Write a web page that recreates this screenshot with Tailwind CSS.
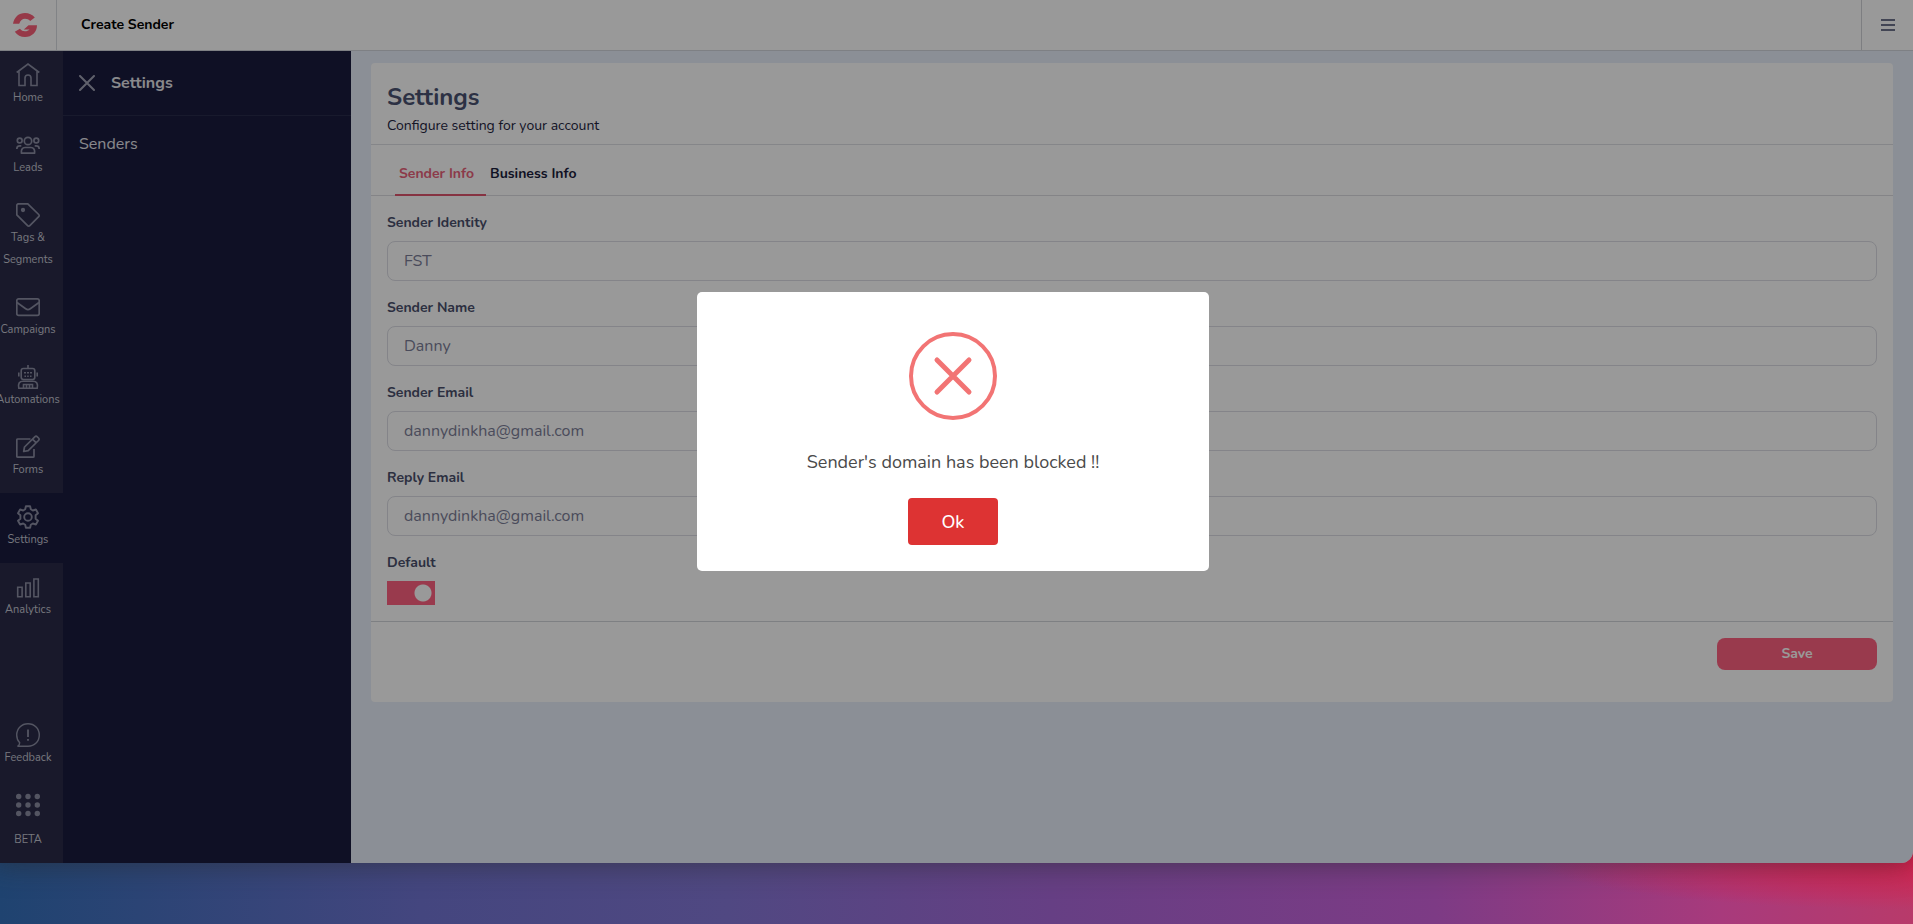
<!DOCTYPE html>
<html lang="en">
<head>
  <meta charset="UTF-8" />
  <meta name="viewport" content="width=device-width, initial-scale=1.0" />
  <title>Create Sender</title>
  <script src="https://cdn.jsdelivr.net/npm/@tailwindcss/browser@4"></script>
</head>
<body class="h-screen overflow-hidden flex flex-col font-[Nunito,'Open_Sans',sans-serif] text-sm bg-[radial-gradient(ellipse_380px_50px_at_100%_93%,#d8204c,transparent),linear-gradient(90deg,#1f4370_0%,#44467f_22%,#504882_38%,#663f84_55%,#7d3b85_75%,#a83a7c_90%,#b83a6a_100%)]">

  <!-- app window -->
  <div class="relative flex-1 min-h-0 -ml-[7px] flex flex-col overflow-hidden rounded-br-xl bg-[#e8eefa] shadow-[0_0_30px_rgba(40,40,40,0.6)]">

    <header class="h-[51px] shrink-0 flex items-stretch bg-white border-b border-[#d2d6dc]">
      <a href="#" aria-label="Dashboard" class="w-16 flex items-center justify-center pr-1 border-r border-[#d8dbe0]">
        <svg class="size-6 ml-1" viewBox="0 0 24 24" fill="#fa6078">
          <path d="M0 10.800C1.200 4 6 0 12 0c4 0 7.300 1.600 9.800 4.500L17.200 8C15.800 6.500 14.200 5.700 12 5.700c-2.600 0-4.600 1.600-5.800 5.100z" />
          <path d="M24 12.200C24 19 18.800 24 12 24c-4.200 0-7.800-2-10.200-5.300l5.100-3c1.300 1.700 3 2.500 5.100 2.500 1.900 0 3.400-.6 4.500-1.800h-5.700l4.700-4.200z" />
        </svg>
      </a>
      <h1 class="flex-1 flex items-center pl-6 font-bold text-black">Create Sender</h1>
      <button type="button" aria-label="Menu" class="w-[52px] flex items-center justify-center border-l border-[#d0d3d8] text-[#6f748c]">
        <svg class="w-3.5 h-3.5" viewBox="0 0 14 14" stroke="currentColor" stroke-width="2"><path d="M0 2h14M0 7h14M0 12h14" /></svg>
      </button>
    </header>

    <div class="flex-1 min-h-0 flex">

      <!-- icon rail -->
      <nav class="w-[70px] shrink-0 flex flex-col bg-[#2a2b48] text-[11px] leading-[22px] text-[#c5c6d2] text-center">
        <a href="#" class="py-3 flex flex-col items-center">
          <svg class="size-6 text-[#8c8ea4]" viewBox="0 0 24 24" fill="none" stroke="currentColor" stroke-width="1.6"><path d="M.7 9.500L12 1l11.300 8.500M3 8v14.500h6V15a3 3 0 0 1 6 0v7.500h6V8" /></svg>
          Home
        </a>
        <a href="#" class="py-3 flex flex-col items-center">
          <svg class="size-6 text-[#8c8ea4]" viewBox="0 0 24 24" fill="none" stroke="currentColor" stroke-width="1.7"><circle cx="12" cy="8" r="3.700" /><circle cx="3.700" cy="7.500" r="2.400" /><circle cx="20.300" cy="7.500" r="2.400" /><path d="M5.500 20.200h13c.6-3.500-1-5.700-3.500-5.700H9c-2.500 0-4.100 2.200-3.500 5.700zM.8 16c0-2 1.200-3.200 3-3.200h1.500M23.200 16c0-2-1.200-3.200-3-3.200h-1.500" /></svg>
          Leads
        </a>
        <a href="#" class="py-3 flex flex-col items-center">
          <svg class="size-6 text-[#8c8ea4]" viewBox="0 0 24 24" fill="none" stroke="currentColor" stroke-width="1.700" stroke-linejoin="round"><path d="M.8 2.500A1.700 1.700 0 0 1 2.500.8h9.300L22.700 11.500a1.500 1.500 0 0 1 0 2.200l-8.900 8.900a1.500 1.500 0 0 1-2.200 0L.8 11.800z" /><circle cx="7" cy="7" r="1.300" fill="currentColor" /></svg>
          <span>Tags &amp;<br />Segments</span>
        </a>
        <a href="#" class="py-3 flex flex-col items-center">
          <svg class="size-6 text-[#8c8ea4]" viewBox="0 0 24 24" fill="none" stroke="currentColor" stroke-width="1.700" stroke-linejoin="round"><rect x=".8" y="3.800" width="22.400" height="16.600" rx="1.800" /><path d="M1 7.500l8.700 6.300c1.500 1.100 3.100 1.100 4.600 0L23 7.500" /></svg>
          Campaigns
        </a>
        <a href="#" class="py-3 flex flex-col items-center whitespace-nowrap">
          <svg class="size-6 text-[#8c8ea4]" viewBox="0 0 24 24" fill="none" stroke="currentColor" stroke-width="1.600"><path d="M12 0v3.500M2.800 7.500v4M21.200 7.500v4" /><rect x="5.200" y="3.500" width="13.600" height="11" rx="2.200" /><path d="M8 7.700h2M11 7.700h2M14 7.700h2M8.500 11.200h1.500M11.200 11.200h1.500M14 11.200h1.500" /><path d="M2.800 23.200c-1-4.500.5-7 4.200-7h10c3.700 0 5.200 2.500 4.200 7zM7.500 23v-3.500h9V23M10.500 19.500V23M13.500 19.500V23" /></svg>
          Automations
        </a>
        <a href="#" class="py-3 flex flex-col items-center">
          <svg class="size-6 text-[#8c8ea4]" viewBox="0 0 24 24" fill="none" stroke="currentColor" stroke-width="1.700" stroke-linejoin="round"><path d="M14.500 4H1.800a1 1 0 0 0-1 1v16.200a1 1 0 0 0 1 1H17a1 1 0 0 0 1-1V14" /><path d="M8.500 12L18.800 1.800c.8-.8 1.700-.8 2.500 0l1.200 1.200c.8.8.8 1.700 0 2.500L12.200 15.700 7.700 16.500zM16.500 4.200L20.200 7.900" /></svg>
          Forms
        </a>
        <a href="#" class="py-3 flex flex-col items-center bg-[#191b3e]">
          <svg class="size-6 text-[#8c8ea4]" viewBox="0 0 24 24" fill="none" stroke="currentColor" stroke-width="1.900" stroke-linejoin="round"><path d="M9.900 1.200h4.200l.7 3.100 2 1.200 3.100-1 2.100 3.700-2.400 2.100v3.400l2.400 2.100-2.100 3.700-3.100-1-2 1.200-.7 3.100H9.900l-.7-3.100-2-1.200-3.100 1L2 15.800l2.400-2.100v-3.400L2 8.200l2.100-3.700 3.100 1 2-1.200z" /><circle cx="12" cy="12" r="3.800" /></svg>
          Settings
        </a>
        <a href="#" class="py-3 flex flex-col items-center">
          <svg class="size-6 text-[#8c8ea4]" viewBox="0 0 24 24" fill="none" stroke="currentColor" stroke-width="1.600"><path d="M1.700 12.200h4.400v9.500H1.700zM9.800 8h4.400v13.700H9.800zM17.900 4h4.400v17.700h-4.400z" /></svg>
          Analytics
        </a>
        <a href="#" class="mt-auto py-3 flex flex-col items-center">
          <svg class="size-6 text-[#8c8ea4]" viewBox="0 0 24 24" fill="none" stroke="currentColor" stroke-width="1.400"><path d="M12 .7c6.500 0 11.300 4.800 11.300 11.300S18.500 23.300 12 23.300H1.500c1.500-.8 2.200-2 2.200-3.500C1.800 17.800.7 15 .7 12 .7 5.500 5.500.7 12 .7z" /><path d="M12 6.500v7.500M12 16v1.800" stroke-width="1.800" /></svg>
          Feedback
        </a>
        <a href="#" class="py-3 flex flex-col items-center gap-3">
          <svg class="size-6 text-[#8c8ea4]" viewBox="0 0 24 24" fill="currentColor"><circle cx="2.700" cy="3.500" r="2.700" /><circle cx="12" cy="3.500" r="2.700" /><circle cx="21.300" cy="3.500" r="2.700" /><circle cx="2.700" cy="12" r="2.700" /><circle cx="12" cy="12" r="2.700" /><circle cx="21.300" cy="12" r="2.700" /><circle cx="2.700" cy="20.500" r="2.700" /><circle cx="12" cy="20.500" r="2.700" /><circle cx="21.300" cy="20.500" r="2.700" /></svg>
          BETA
        </a>
      </nav>

      <!-- settings panel -->
      <aside class="w-72 shrink-0 bg-[#191b3e] text-base text-[#e4e4ea]">
        <div class="h-[65px] flex items-center gap-4 px-4 border-b border-[#292c4c]">
          <button type="button" aria-label="Close" class="text-[#a0a2b4]">
            <svg class="size-4" viewBox="0 0 16 16" stroke="currentColor" stroke-width="2" stroke-linecap="round"><path d="M1 1l14 14M15 1L1 15" /></svg>
          </button>
          <h2 class="font-bold">Settings</h2>
        </div>
        <a href="#" class="block px-4 py-4">Senders</a>
      </aside>

      <main class="flex-1 min-w-0 px-5 py-3">
        <form class="bg-white rounded-sm pb-8">
          <div class="h-[82px] px-4 pt-4 border-b border-[#dedfe4]">
            <h2 class="text-2xl leading-9 font-bold text-[#4a5272]">Settings</h2>
            <p class="leading-[22px] text-[#24253f]">Configure setting for your account</p>
          </div>

          <div class="h-[51px] px-6 flex font-bold border-b border-[#dcdde2]">
            <button type="button" class="pl-1 pr-3 pt-2 -mb-px border-b-2 border-[#e0566f] text-[#e9627a]">Sender Info</button>
            <button type="button" class="px-1 pt-2 -mb-px border-b-2 border-transparent text-[#1c1d3c]">Business Info</button>
          </div>

          <div class="px-4 pt-4 pb-4 flex flex-col gap-4 border-b border-[#d3d5db] text-[#4a4f6c]">
            <div>
              <label for="identity" class="block leading-[22px] mb-[7px] font-bold">Sender Identity</label>
              <input id="identity" type="text" value="FST" class="block w-full h-10 px-4 text-base text-[#7c7e98] border border-[#dcdde4] rounded-lg" />
            </div>
            <div>
              <label for="name" class="block leading-[22px] mb-[7px] font-bold">Sender Name</label>
              <input id="name" type="text" value="Danny" class="block w-full h-10 px-4 text-base text-[#7c7e98] border border-[#dcdde4] rounded-lg" />
            </div>
            <div>
              <label for="email" class="block leading-[22px] mb-[7px] font-bold">Sender Email</label>
              <input id="email" type="email" value="dannydinkha@gmail.com" class="block w-full h-10 px-4 text-base text-[#7c7e98] border border-[#dcdde4] rounded-lg" />
            </div>
            <div>
              <label for="reply" class="block leading-[22px] mb-[7px] font-bold">Reply Email</label>
              <input id="reply" type="email" value="dannydinkha@gmail.com" class="block w-full h-10 px-4 text-base text-[#7c7e98] border border-[#dcdde4] rounded-lg" />
            </div>
            <div>
              <label for="default" class="block leading-[22px] mb-[7px] font-bold">Default</label>
              <input id="default" type="checkbox" checked class="appearance-none block w-12 h-6 bg-[#ff6280] checked:bg-[radial-gradient(circle_at_36px_12px,#fff_8px,transparent_9px)]" />
            </div>
          </div>

          <div class="px-4 pt-4 flex justify-end">
            <button type="button" class="w-40 h-8 rounded-lg bg-[#ff6280] font-bold text-white">Save</button>
          </div>
        </form>
      </main>
    </div>

    <!-- blocked domain alert -->
    <div class="absolute inset-0 flex items-center justify-center bg-black/40">
      <div role="alertdialog" aria-labelledby="alert-text" class="w-lg flex flex-col items-center bg-white rounded-[5px] pt-10 pb-[26px]">
        <svg class="size-[88px]" viewBox="0 0 88 88" fill="none" stroke="#f27474" stroke-width="4"><circle cx="44" cy="44" r="42" /><path d="M28 28l32 32M60 28L28 60" stroke-width="5" stroke-linecap="round" /></svg>
        <p id="alert-text" class="mt-7 text-lg leading-7 text-[#4a4a4a]">Sender's domain has been blocked !!</p>
        <button type="button" class="mt-[22px] w-[90px] h-[47px] rounded bg-[#dd3333] text-lg font-medium text-white">Ok</button>
      </div>
    </div>
  </div>

  <div class="h-[61px] shrink-0"></div>
</body>
</html>
